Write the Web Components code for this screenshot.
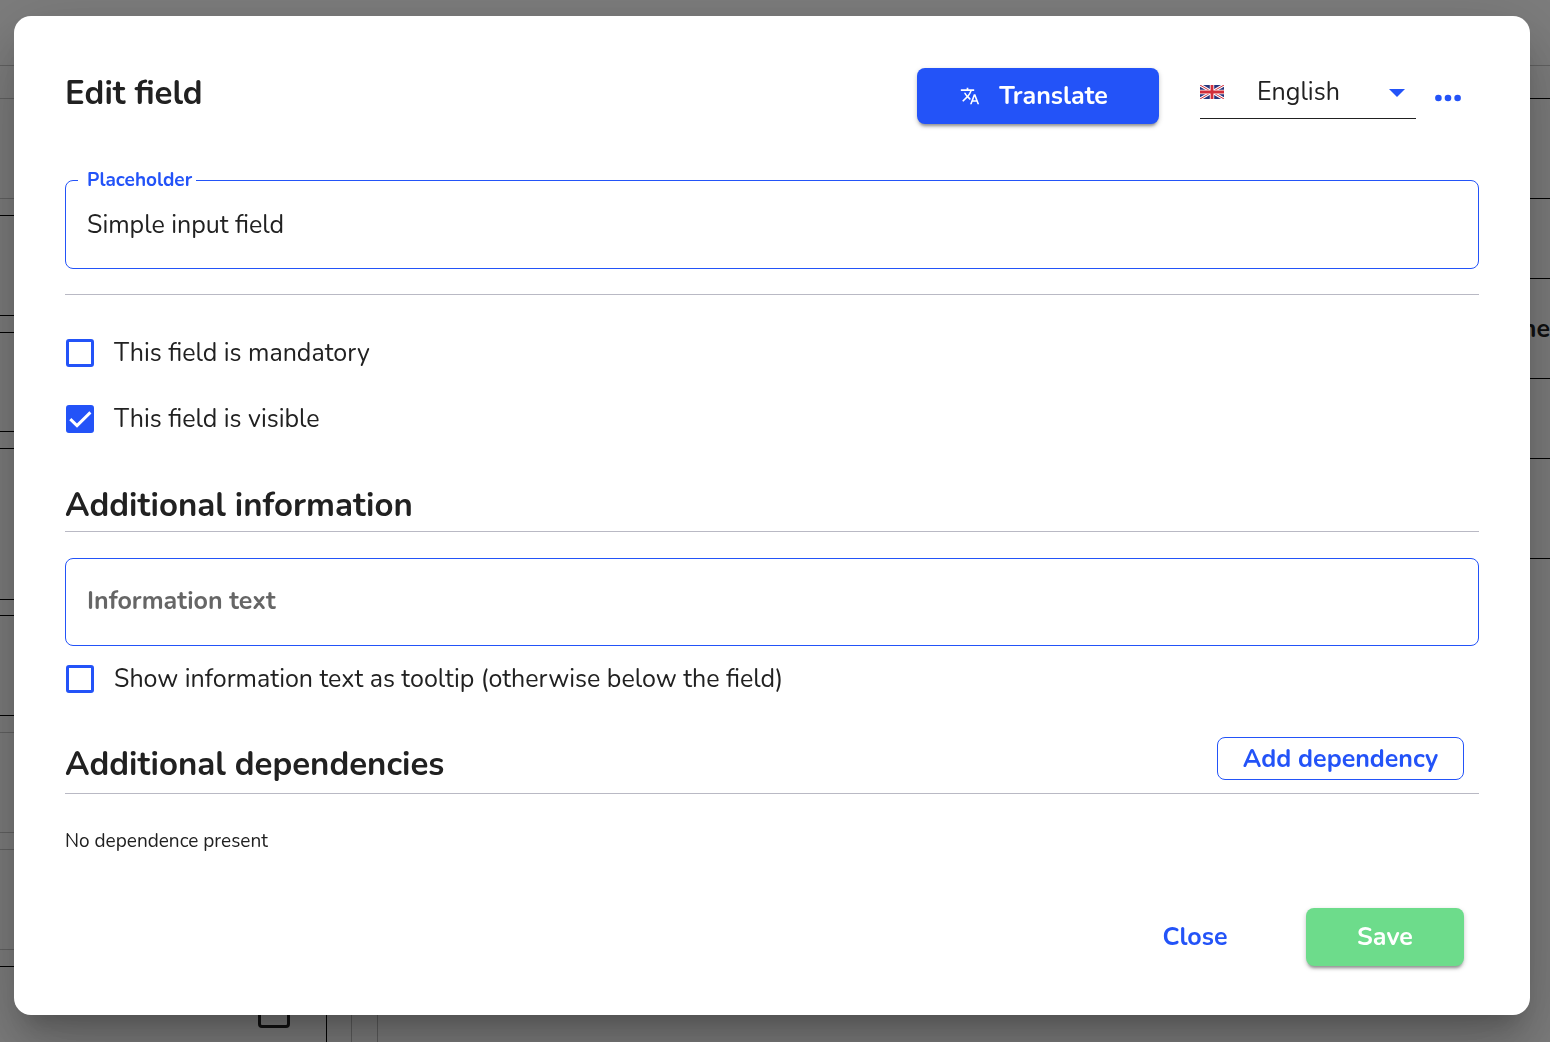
<!DOCTYPE html>
<html lang="en">
<head>
<meta charset="utf-8">
<title>Edit field</title>
<style>
  html { --blue: #2353f8; --ink: #212121; --rule: #b9b9c4; }
  body { margin: 0; min-height: 100vh; overflow: hidden; font-family: Nunito, Lato, "Open Sans", sans-serif; font-size: 25px; color: var(--ink); }
</style>
</head>
<body>
<edit-field-page></edit-field-page>
<script>
function define(name, html, setup) {
  const template = document.createElement('template');
  template.innerHTML = '<style>*{box-sizing:border-box}:host{box-sizing:border-box;display:block}button,input,select{font:inherit;color:inherit;margin:0}</style>' + html;
  customElements.define(name, class extends HTMLElement {
    connectedCallback() {
      if (this.shadowRoot) return;
      const root = this.attachShadow({ mode: 'open' });
      root.append(template.content.cloneNode(true));
      if (setup) setup(this, root);
    }
  });
}

/* Horizontal grid lines of the form builder; rows="height:tone ..." */
define('builder-lines', `
  <style>
    div { border-bottom: 1px solid #c4c4c4; display: flex; align-items: center; justify-content: flex-end; }
    div.k { border-color: #000; }
    b { font-size: 25px; font-weight: 700; }
  </style>`, (host, root) => {
  for (const row of host.getAttribute('rows').split(' ')) {
    const [h, tone, text] = row.split(':');
    const d = document.createElement('div');
    d.style.height = h + 'px';
    if (tone === 'k') d.className = 'k';
    if (text) { const b = document.createElement('b'); b.textContent = text; d.append(b); }
    root.append(d);
  }
});

define('form-builder', `
  <style>
    :host { display: flex; height: 100vh; background: #fafafa; overflow: hidden; }
    aside { width: 327px; display: flex; flex-direction: column; }
    .gutter { width: 51px; display: flex; margin-top: 66px; }
    .gutter i { width: 25px; border-right: 1px solid #bbb; }
    .gutter i + i { width: 26px; }
    main { flex: 1; }
    .pick { flex: 1; display: flex; justify-content: flex-end; padding: 29px 36px 0 0; border-right: 1px solid #000; }
    input { appearance: none; flex: none; width: 32px; height: 32px; border: 3px solid #222; border-radius: 4px; }
  </style>
  <aside>
    <builder-lines rows="66:g 33:g 100:g 17:k 100:k 17:k 99:k 17:k 151:k 16:k 100:k 17:g 100:g 17:g 100:g 17:k"></builder-lines>
    <div class="pick"><input type="checkbox" aria-label="Select row"></div>
  </aside>
  <div class="gutter"><i></i><i></i></div>
  <main><builder-lines rows="66:g 33:k 100:k 80:k 100:k:ne 80:k 100:k"></builder-lines></main>`);

define('modal-panel', `
  <style>
    :host { position: fixed; inset: 0; background: rgba(0,0,0,.5); padding: 16px 20px 27px 14px; }
    section { background: #fff; border-radius: 17px; padding: 52px 51px 49px;
      box-shadow: 0 18px 25px -11px rgba(0,0,0,.2), 0 39px 62px 5px rgba(0,0,0,.14), 0 15px 75px 13px rgba(0,0,0,.12); }
  </style>
  <section role="dialog" aria-label="Edit field"><slot></slot></section>`);

define('action-button', `
  <style>
    button { display: flex; align-items: center; justify-content: center; gap: 19px; width: 100%; height: 56px; border: 0; border-radius: 8px; padding: 0 8px 0 0;
      background: none; color: var(--blue); font-weight: 700; white-space: nowrap; cursor: pointer; }
    :host([kind=primary]) button, :host([kind=save]) button { color: #fff; box-shadow: 0 4px 3px -2px rgba(0,0,0,.3), 0 2px 5px rgba(0,0,0,.22); }
    :host([kind=primary]) button { background: var(--blue); }
    :host([kind=save]) button { background: #6ddc8b; height: 58px; padding: 0; }
    :host([kind=text]) button { height: 58px; padding: 0; }
    :host([kind=outline]) button { border: 1px solid var(--blue); height: 43px; padding: 0; }
  </style>
  <button type="button"><slot name="icon"></slot><slot></slot></button>`);

define('language-select', `
  <style>
    :host { display: flex; align-items: center; height: 51px; border-bottom: 1px solid #212121; padding: 0 11px 2px 0; }
    svg { flex: none; }
    select { appearance: none; flex: 1; min-width: 0; height: 48px; border: 0; background: none; padding: 0 0 0 33px; outline: 0; }
  </style>
  <svg width="24" height="14" viewBox="0 0 24 14" aria-hidden="true">
    <rect width="24" height="14" fill="#28347c"/>
    <path d="M0 0L24 14M24 0L0 14" stroke="#fff" stroke-width="3"/>
    <path d="M0 0L24 14M24 0L0 14" stroke="#d22e3a" stroke-width="1"/>
    <path d="M12 0V14M0 7H24" stroke="#fff" stroke-width="4.4"/>
    <path d="M12 0V14M0 7H24" stroke="#d22e3a" stroke-width="2.8"/>
  </svg>
  <select aria-label="Language"><option>English</option></select>
  <svg width="16" height="10" viewBox="0 0 16 10" aria-hidden="true"><path d="M0 2H16L8 10z" fill="var(--blue)"/></svg>`);

define('more-button', `
  <style>
    button { display: flex; align-items: center; border: 0; background: none; padding: 0; height: 60px; cursor: pointer; }
  </style>
  <button type="button" aria-label="More"><svg width="26" height="8" viewBox="0 0 26 8" fill="var(--blue)"><circle cx="3.4" cy="4" r="3.3"/><circle cx="13" cy="4" r="3.3"/><circle cx="22.6" cy="4" r="3.3"/></svg></button>`);

define('text-field', `
  <style>
    fieldset { border: 1px solid var(--blue); border-radius: 8px; margin: 0; padding: 0 12px; min-width: 0; }
    legend { padding: 0 4px 0 9px; height: 24px; line-height: 24px; font-size: 19px; font-weight: 700; color: var(--blue); }
    input { display: block; width: 100%; height: 86px; border: 0; background: none; outline: 0; padding: 0 9px 2px; }
    :host([label]) input { height: 76px; padding-bottom: 11px; }
    input::placeholder { color: #666; font-weight: 700; opacity: 1; }
  </style>
  <fieldset><legend><label for="in"></label></legend><input id="in" type="text"></fieldset>`, (host, root) => {
  const input = root.querySelector('input');
  const label = host.getAttribute('label');
  if (label) root.querySelector('label').textContent = label;
  else { root.querySelector('legend').remove(); input.setAttribute('aria-label', host.getAttribute('placeholder')); }
  input.value = host.getAttribute('value') || '';
  input.placeholder = host.getAttribute('placeholder') || '';
});

define('check-row', `
  <style>
    :host { height: 66px; display: flex; align-items: center; }
    label { display: flex; align-items: center; gap: 20px; padding-left: 1px; line-height: 36px; }
    .box { display: grid; width: 28px; height: 28px; }
    .box > * { grid-area: 1 / 1; }
    input { appearance: none; width: 28px; height: 28px; border: 3px solid var(--blue); border-radius: 3px; }
    input:checked { background: var(--blue); }
    svg { display: none; pointer-events: none; }
    input:checked + svg { display: block; }
  </style>
  <label><span class="box"><input type="checkbox"><svg width="28" height="28" viewBox="0 0 28 28" fill="none" stroke="#fff" stroke-width="3" aria-hidden="true"><path d="M4.3 14.2L11 20.6L24.4 7.4"/></svg></span><slot></slot></label>`, (host, root) => {
  root.querySelector('input').checked = host.hasAttribute('checked');
});

define('section-title', `
  <style>
    :host { display: flex; justify-content: space-between; border-bottom: 1px solid var(--rule); }
    :host([action]) { padding: 0 15px 3px 0; min-height: 57px; }
    h2 { margin: 0; align-self: flex-end; font-size: 33px; line-height: 50px; font-weight: 700; }
  </style>
  <h2><slot></slot></h2><slot name="action"></slot>`);

define('edit-field-page', `
  <style>
    header { display: flex; align-items: flex-start; padding-right: 18px; }
    h1 { margin: 0 auto 0 0; font-size: 33px; line-height: 52px; font-weight: 700; }
    .translate { width: 242px; }
    language-select { width: 216px; margin: 0 19px 0 41px; }
    .first { margin: 40px 0 25px; }
    hr { border: 0; border-top: 1px solid var(--rule); margin: 0 0 25px; }
    .info { margin: 29px 0 26px; }
    .deps { margin-top: 25px; }
    .add { width: 247px; }
    p { margin: 34px 0 54px; font-size: 19px; line-height: 26px; }
    footer { display: flex; justify-content: flex-end; padding-right: 15px; gap: 32px; }
    .close, .save { width: 158px; }
  </style>
  <form-builder></form-builder>
  <modal-panel>
    <header>
      <h1>Edit field</h1>
      <action-button kind="primary" class="translate"><svg slot="icon" width="20" height="20" viewBox="0 0 24 24" fill="#fff" aria-hidden="true"><path d="M12.87 15.07l-2.54-2.51.03-.03c1.74-1.94 2.98-4.17 3.71-6.53H17V4h-7V2H8v2H1v1.99h11.17C11.5 7.92 10.44 9.75 9 11.35 8.07 10.32 7.3 9.19 6.69 8h-2c.73 1.63 1.73 3.17 2.98 4.56l-5.09 5.02L4 19l5-5 3.11 3.11.76-2.04zM18.5 10h-2L12 22h2l1.12-3h4.75L21 22h2l-4.5-12zm-2.62 7l1.62-4.33L19.12 17h-3.24z"/></svg>Translate</action-button>
      <language-select></language-select>
      <more-button></more-button>
    </header>
    <text-field class="first" label="Placeholder" value="Simple input field"></text-field>
    <hr>
    <check-row>This field is mandatory</check-row>
    <check-row checked>This field is visible</check-row>
    <section-title class="info">Additional information</section-title>
    <text-field placeholder="Information text"></text-field>
    <check-row>Show information text as tooltip (otherwise below the field)</check-row>
    <section-title class="deps" action>Additional dependencies<action-button slot="action" kind="outline" class="add">Add dependency</action-button></section-title>
    <p>No dependence present</p>
    <footer>
      <action-button kind="text" class="close">Close</action-button>
      <action-button kind="save" class="save">Save</action-button>
    </footer>
  </modal-panel>`);
</script>
</body>
</html>
